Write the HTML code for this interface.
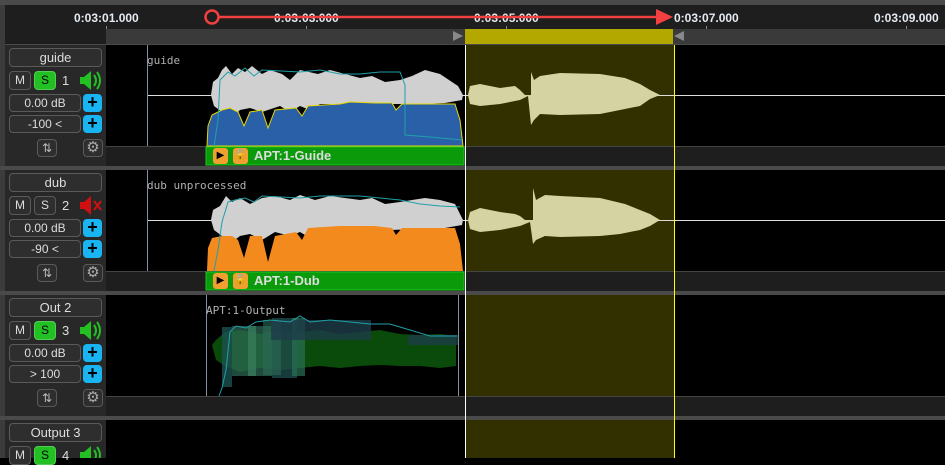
<!DOCTYPE html>
<html><head><meta charset="utf-8">
<style>
*{margin:0;padding:0;box-sizing:border-box}
body{width:945px;height:458px;overflow:hidden;background:#000;position:relative;font-family:"Liberation Sans","DejaVu Sans",sans-serif}
.a{position:absolute}
.box{position:absolute;border:1px solid #5a5a5a;border-radius:4px;background:#2e2e2e;color:#ddd;font-size:12px;text-align:center;line-height:16px}
.plus{position:absolute;width:19px;height:18px;border-radius:4px;background:#19b4f2;color:#000;font-size:18px;line-height:17px;text-align:center;font-weight:bold}
.tl{position:absolute;color:#e4eaf2;font-size:12px;font-weight:bold;top:11px}
.lbl{position:absolute;color:#b0b0b0;font-family:"DejaVu Sans Mono","Liberation Mono",monospace;font-size:11px}
</style></head><body>
<div class="a" style="left:0;top:0;width:945px;height:5px;background:#4a4a4a"></div>
<div class="a" style="left:0;top:5px;width:945px;height:24px;background:#1e1e1e"></div>
<div class="a" style="left:106px;top:29px;width:839px;height:15px;background:#3a3a3a"></div>
<div class="a" style="left:5px;top:29px;width:101px;height:15px;background:#1e1e1e"></div>
<div class="a" style="left:0;top:44px;width:945px;height:1px;background:#4a4a4a"></div>
<div class="a" style="left:0;top:5px;width:5px;height:453px;background:#3c3c3c"></div>
<div class="tl" style="left:74px">0:03:01.000</div>
<div class="tl" style="left:274px">0:03:03.000</div>
<div class="tl" style="left:474px">0:03:05.000</div>
<div class="tl" style="left:674px">0:03:07.000</div>
<div class="tl" style="left:874px">0:03:09.000</div>
<div class="a" style="left:106px;top:26px;width:1px;height:3px;background:#888"></div>
<div class="a" style="left:306px;top:26px;width:1px;height:3px;background:#888"></div>
<div class="a" style="left:506px;top:26px;width:1px;height:3px;background:#888"></div>
<div class="a" style="left:706px;top:26px;width:1px;height:3px;background:#888"></div>
<div class="a" style="left:906px;top:26px;width:1px;height:3px;background:#888"></div>
<div class="a" style="left:465px;top:29px;width:208px;height:15px;background:#b3a800"></div>
<svg class="a" style="left:0;top:0" width="945" height="458">
<polygon points="453,31 463,36 453,41" fill="#888"/>
<polygon points="684,31 674,36 684,41" fill="#888"/>
<rect x="465" y="45" width="209" height="101" fill="#333000"/>
<rect x="465" y="170" width="209" height="101" fill="#333000"/>
<rect x="465" y="295" width="209" height="101" fill="#333000"/>
<rect x="465" y="420" width="209" height="38" fill="#333000"/>
<rect x="106" y="146" width="839" height="20" fill="#1e1e1e"/>
<rect x="106" y="271" width="839" height="20" fill="#1e1e1e"/>
<rect x="106" y="396" width="839" height="20" fill="#1e1e1e"/>
<rect x="106" y="146" width="839" height="1" fill="#444"/>
<rect x="106" y="271" width="839" height="1" fill="#444"/>
<rect x="106" y="396" width="839" height="1" fill="#444"/>
<rect x="0" y="166" width="945" height="4" fill="#4a4a4a"/>
<rect x="0" y="291" width="945" height="4" fill="#4a4a4a"/>
<rect x="0" y="416" width="945" height="4" fill="#4a4a4a"/>
<line x1="147.5" y1="45" x2="147.5" y2="146" stroke="#8090a0"/>
<line x1="148" y1="95.5" x2="945" y2="95.5" stroke="#ddd"/>
<polygon points="211,95 213,82 218,78 222,70 226,66 232,74 238,68 245,72 252,66 262,74 270,70 282,74 290,80 300,70 318,74 330,70 345,74 360,78 372,76 385,82 400,80 412,76 425,70 440,74 452,82 458,86 463,95 462,100 445,103 420,104 390,104 360,106 345,104 320,104 310,110 300,106 290,112 280,106 262,112 250,108 240,110 232,118 222,112 214,106" fill="#d0d0d0"/>
<polygon points="207,146 208,126 212,115 222,110 230,108 238,112 244,126 250,112 262,110 268,128 275,110 296,108 302,116 308,106 340,104 350,102 375,103 392,103 396,110 402,104 440,104 455,104 460,120 463,146" fill="#2a60a8" stroke="#e8d800" stroke-width="1"/>
<polyline points="214,146 218,120 220,80 228,72 235,76 245,68 254,76 262,70 300,72 320,70 340,74 360,74 380,72 400,72 405,85 405,135 430,137 462,140" fill="none" stroke="#20a0a8"/>
<polygon points="468,95 470,86 480,84 500,88 515,86 520,90 525,95 531,95 531,72 534,80 540,76 560,73 600,74 625,78 640,84 650,90 660,95 650,99 640,106 620,110 600,114 560,115 540,114 534,120 531,125 528,96 520,100 500,104 480,106 470,104" fill="#d6d3a2"/>
<rect x="206" y="147" width="258" height="18" fill="#0a9a0a"/>
<rect x="206" y="147" width="258" height="18" fill="none" stroke="#1dc41d"/>
<line x1="147.5" y1="170" x2="147.5" y2="271" stroke="#8090a0"/>
<line x1="148" y1="220.5" x2="945" y2="220.5" stroke="#ddd"/>
<polygon points="211,220 213,210 220,206 226,196 232,202 240,198 250,204 262,198 275,196 290,200 300,195 315,200 330,196 345,198 360,200 372,198 385,204 400,202 412,200 425,198 440,200 455,204 463,220 462,225 445,228 420,229 390,230 360,232 345,231 320,232 310,238 300,232 290,236 275,232 262,240 250,234 240,236 232,242 222,236 214,230" fill="#d0d0d0"/>
<polygon points="207,271 208,248 212,238 222,236 232,236 238,240 244,258 250,236 262,236 268,262 275,236 296,232 302,240 308,228 340,226 350,226 375,226 392,228 396,235 402,228 440,228 455,228 460,244 463,271" fill="#f28a1e"/>
<polyline points="214,271 218,250 222,222 228,202 235,200 245,198 254,202 262,196 300,198 320,196 340,196 360,196 380,198 400,200 420,204 440,206 460,207" fill="none" stroke="#20a0a8"/>
<polygon points="468,220 470,212 480,208 500,212 515,214 520,216 525,220 533,220 533,188 536,200 545,195 560,196 600,198 625,204 640,210 650,214 660,220 650,226 640,230 620,234 600,236 560,237 545,236 536,240 533,244 530,222 520,226 500,230 480,232 470,229" fill="#d6d3a2"/>
<rect x="206" y="272" width="258" height="18" fill="#0a9a0a"/>
<rect x="206" y="272" width="258" height="18" fill="none" stroke="#1dc41d"/>
<line x1="206.5" y1="295" x2="206.5" y2="396" stroke="#8090a0"/>
<line x1="458.5" y1="295" x2="458.5" y2="396" stroke="#8090a0"/>
<polygon points="212,345 216,340 225,332 240,330 260,334 280,330 300,332 320,330 340,334 360,332 380,330 400,334 420,335 440,334 456,336 456,366 440,368 420,366 400,366 380,365 360,366 340,368 320,366 300,368 280,370 260,368 240,372 225,366 216,360" fill="#0a4a0a"/>
<rect x="222" y="327" width="10" height="60" fill="#1d5050" opacity=".8"/>
<rect x="232" y="326" width="40" height="50" fill="#2c6a55" opacity=".7"/>
<rect x="248" y="326" width="8" height="50" fill="#3a8060" opacity=".7"/>
<rect x="272" y="318" width="25" height="60" fill="#1d4a4a" opacity=".8"/>
<rect x="263" y="320" width="18" height="55" fill="#2c6a55" opacity=".6"/>
<rect x="292" y="318" width="13" height="58" fill="#2a7055" opacity=".7"/>
<rect x="271" y="320" width="100" height="20" fill="#1d3c48" opacity=".8"/>
<rect x="408" y="335" width="50" height="10" fill="#1d3c48" opacity=".8"/>
<polyline points="219,396 222,388 226,370 230,332 236,326 246,328 256,322 270,320 290,322 300,316 310,322 330,320 350,322 370,324 390,324 410,330 430,336 457,336" fill="none" stroke="#20a0a8"/>
<line x1="465.5" y1="45" x2="465.5" y2="458" stroke="#fff"/>
<line x1="674.5" y1="45" x2="674.5" y2="458" stroke="#ff0"/>
<circle cx="212" cy="17" r="6.5" fill="none" stroke="#f24040" stroke-width="2.5"/>
<line x1="219" y1="17" x2="660" y2="17" stroke="#f24040" stroke-width="2.5"/>
<polygon points="656,9 673,17 656,25" fill="#f24040"/>
<!-- speakers -->
<g fill="#22c022"><rect x="80" y="77" width="4" height="7"/><polygon points="84,77 91,71 91,90 84,84"/><path d="M94,75 Q98,80.5 94,86" fill="none" stroke="#22c022" stroke-width="2"/><path d="M97,72 Q103,80.5 97,89" fill="none" stroke="#22c022" stroke-width="2"/></g>
<g fill="#d01010"><rect x="80" y="202" width="4" height="7"/><polygon points="84,202 91,196 91,215 84,209"/><path d="M94,201 L101,210 M101,201 L94,210" stroke="#d01010" stroke-width="2"/></g>
<g fill="#22c022"><rect x="80" y="327" width="4" height="7"/><polygon points="84,327 91,321 91,340 84,334"/><path d="M94,325 Q98,330.5 94,336" fill="none" stroke="#22c022" stroke-width="2"/><path d="M97,322 Q103,330.5 97,339" fill="none" stroke="#22c022" stroke-width="2"/></g>
<g fill="#22c022"><rect x="80" y="452" width="4" height="7"/><polygon points="84,452 91,446 91,465 84,459"/><path d="M94,450 Q98,455 94,461" fill="none" stroke="#22c022" stroke-width="2"/><path d="M97,447 Q103,455 97,464" fill="none" stroke="#22c022" stroke-width="2"/></g>
</svg>
<div class="lbl" style="left:147px;top:54px">guide</div>
<div class="lbl" style="left:147px;top:179px">dub unprocessed</div>
<div class="lbl" style="left:206px;top:304px">APT:1-Output</div>
<div class="a" style="left:213px;top:148px;width:15px;height:16px;background:#f0a030;border-radius:3px;font-size:10px;line-height:16px;text-align:center">▶</div>
<div class="a" style="left:233px;top:148px;width:15px;height:16px;background:#f0a030;border-radius:3px;font-size:10px;line-height:16px;text-align:center">🔓</div>
<div class="a" style="left:254px;top:147px;color:#ddd;font-size:13px;line-height:18px;font-weight:bold">APT:1-Guide</div>
<div class="a" style="left:213px;top:273px;width:15px;height:16px;background:#f0a030;border-radius:3px;font-size:10px;line-height:16px;text-align:center">▶</div>
<div class="a" style="left:233px;top:273px;width:15px;height:16px;background:#f0a030;border-radius:3px;font-size:10px;line-height:16px;text-align:center">🔓</div>
<div class="a" style="left:254px;top:272px;color:#ddd;font-size:13px;line-height:18px;font-weight:bold">APT:1-Dub</div>

<div class="a" style="left:5px;top:45px;width:101px;height:121px;background:#282828"></div>
<div class="a" style="left:5px;top:170px;width:101px;height:121px;background:#282828"></div>
<div class="a" style="left:5px;top:295px;width:101px;height:121px;background:#282828"></div>
<div class="a" style="left:5px;top:420px;width:101px;height:38px;background:#282828"></div>

<div class="box" style="left:9px;top:48px;width:93px;height:19px;font-size:13px;line-height:17px">guide</div>
<div class="box" style="left:9px;top:71px;width:22px;height:19px">M</div>
<div class="box" style="left:34px;top:71px;width:22px;height:19px;background:#22c022;border-color:#5c5;color:#000">S</div>
<div class="a" style="left:62px;top:73px;color:#ddd;font-size:13px">1</div>
<div class="box" style="left:9px;top:94px;width:72px;height:18px">0.00 dB</div><div class="plus" style="left:83px;top:94px">+</div>
<div class="box" style="left:9px;top:115px;width:72px;height:18px">-100 &lt;</div><div class="plus" style="left:83px;top:115px">+</div>
<div class="box" style="left:37px;top:139px;width:20px;height:18px;color:#bbb">⇅</div>
<div class="box" style="left:83px;top:139px;width:20px;height:18px;color:#aaa;font-size:15px">⚙</div>

<div class="box" style="left:9px;top:173px;width:93px;height:19px;font-size:13px;line-height:17px">dub</div>
<div class="box" style="left:9px;top:196px;width:22px;height:19px">M</div>
<div class="box" style="left:34px;top:196px;width:22px;height:19px">S</div>
<div class="a" style="left:62px;top:198px;color:#ddd;font-size:13px">2</div>
<div class="box" style="left:9px;top:219px;width:72px;height:18px">0.00 dB</div><div class="plus" style="left:83px;top:219px">+</div>
<div class="box" style="left:9px;top:240px;width:72px;height:18px">-90 &lt;</div><div class="plus" style="left:83px;top:240px">+</div>
<div class="box" style="left:37px;top:264px;width:20px;height:18px;color:#bbb">⇅</div>
<div class="box" style="left:83px;top:264px;width:20px;height:18px;color:#aaa;font-size:15px">⚙</div>

<div class="box" style="left:9px;top:298px;width:93px;height:19px;font-size:13px;line-height:17px">Out 2</div>
<div class="box" style="left:9px;top:321px;width:22px;height:19px">M</div>
<div class="box" style="left:34px;top:321px;width:22px;height:19px;background:#22c022;border-color:#5c5;color:#000">S</div>
<div class="a" style="left:62px;top:323px;color:#ddd;font-size:13px">3</div>
<div class="box" style="left:9px;top:344px;width:72px;height:18px">0.00 dB</div><div class="plus" style="left:83px;top:344px">+</div>
<div class="box" style="left:9px;top:365px;width:72px;height:18px">&gt; 100</div><div class="plus" style="left:83px;top:365px">+</div>
<div class="box" style="left:37px;top:389px;width:20px;height:18px;color:#bbb">⇅</div>
<div class="box" style="left:83px;top:389px;width:20px;height:18px;color:#aaa;font-size:15px">⚙</div>

<div class="box" style="left:9px;top:423px;width:93px;height:19px;font-size:13px;line-height:17px">Output 3</div>
<div class="box" style="left:9px;top:446px;width:22px;height:19px">M</div>
<div class="box" style="left:34px;top:446px;width:22px;height:19px;background:#22c022;border-color:#5c5;color:#000">S</div>
<div class="a" style="left:62px;top:448px;color:#ddd;font-size:13px">4</div>
<svg class="a" style="left:78px;top:444px" width="28" height="14"><rect x="2" y="8" width="4" height="7" fill="#22c022"/><polygon points="6,8 13,2 13,21 6,15" fill="#22c022"/><path d="M16,6 Q20,11 16,17" fill="none" stroke="#22c022" stroke-width="2"/><path d="M19,3 Q25,11 19,20" fill="none" stroke="#22c022" stroke-width="2"/></svg>
<svg class="a" style="left:78px;top:194px" width="28" height="22"><rect x="2" y="8" width="4" height="7" fill="#d01010"/><polygon points="6,8 13,2 13,21 6,15" fill="#d01010"/><path d="M16,7 L23,16 M23,7 L16,16" stroke="#d01010" stroke-width="2"/></svg>
<svg class="a" style="left:78px;top:69px" width="28" height="22"><rect x="2" y="8" width="4" height="7" fill="#22c022"/><polygon points="6,8 13,2 13,21 6,15" fill="#22c022"/><path d="M16,6 Q20,11.5 16,17" fill="none" stroke="#22c022" stroke-width="2"/><path d="M19,3 Q25,11.5 19,20" fill="none" stroke="#22c022" stroke-width="2"/></svg>
<svg class="a" style="left:78px;top:319px" width="28" height="22"><rect x="2" y="8" width="4" height="7" fill="#22c022"/><polygon points="6,8 13,2 13,21 6,15" fill="#22c022"/><path d="M16,6 Q20,11.5 16,17" fill="none" stroke="#22c022" stroke-width="2"/><path d="M19,3 Q25,11.5 19,20" fill="none" stroke="#22c022" stroke-width="2"/></svg>
</body></html>
